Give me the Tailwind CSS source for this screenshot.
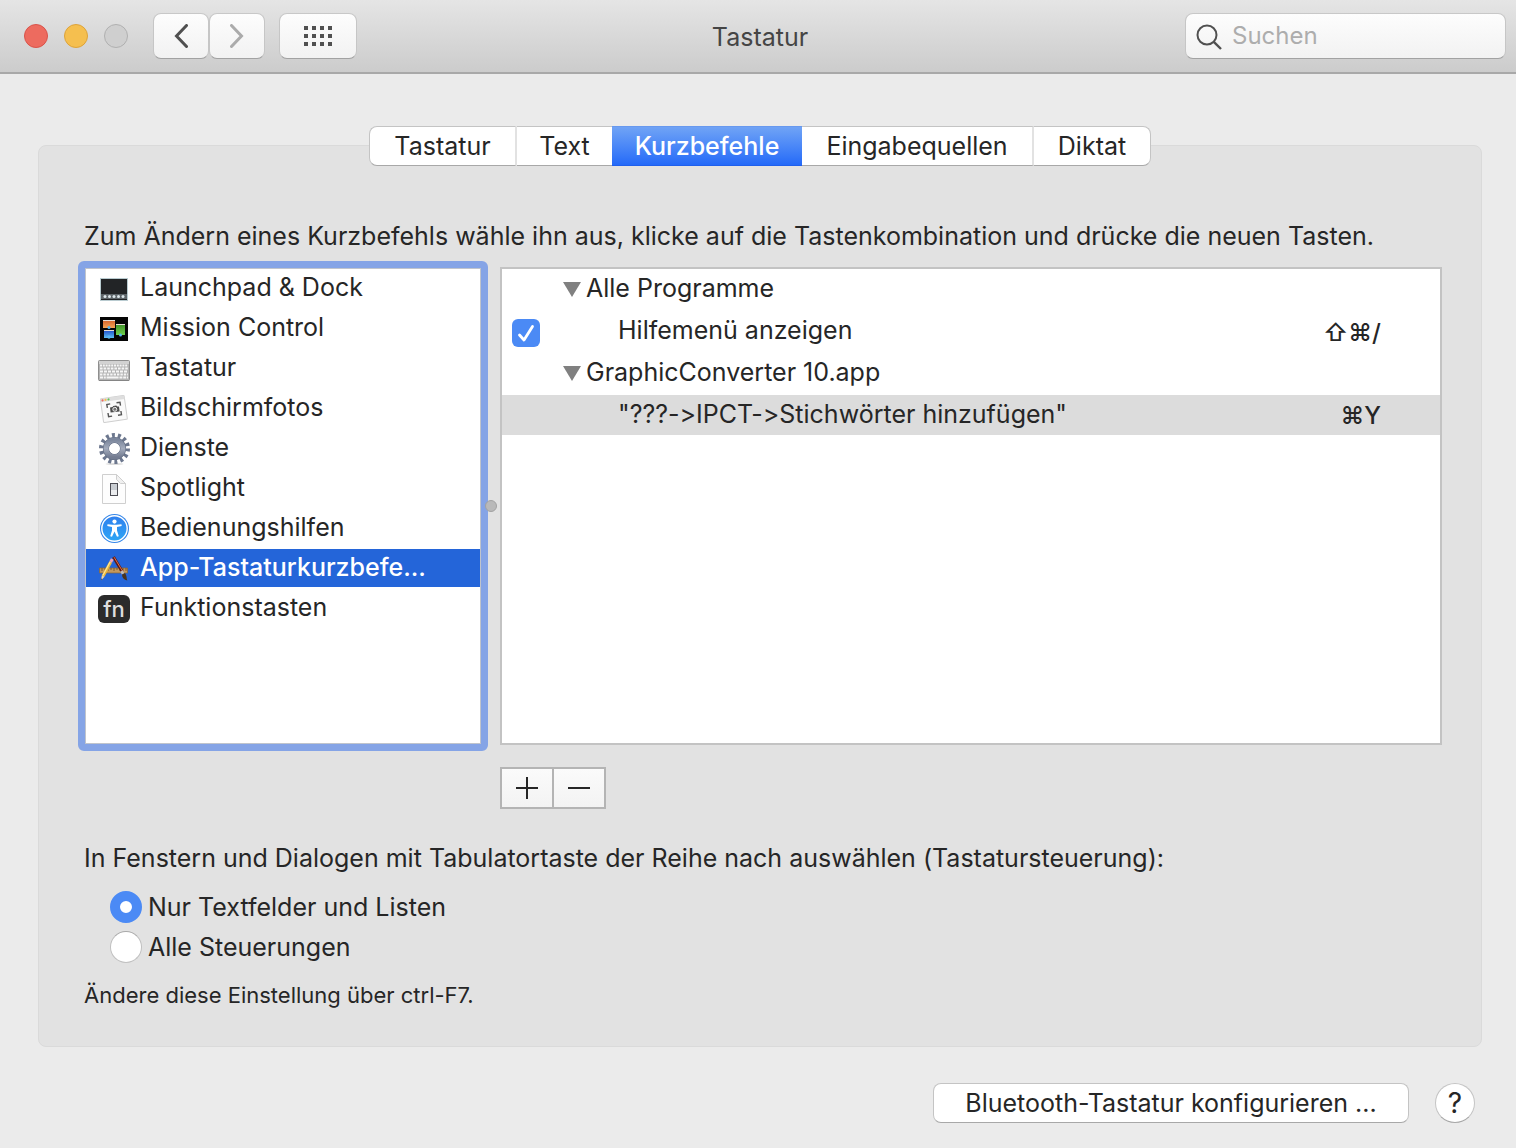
<!DOCTYPE html>
<html lang="de">
<head>
<meta charset="utf-8">
<meta name="viewport" content="width=device-width, initial-scale=1">
<title>Tastatur</title>
<script src="https://cdn.jsdelivr.net/npm/@tailwindcss/browser@4"></script>
</head>
<body class="flex min-h-screen flex-col bg-[#ebebeb] font-['Inter','Liberation_Sans',sans-serif] text-[25px] leading-8 text-[#262626] [font-feature-settings:'calt'_0]">

<header class="grid h-[74px] grid-cols-[1fr_auto_1fr] items-center border-b-2 border-[#a8a8a8] bg-linear-to-b from-[#e5e5e5] to-[#cccccc] px-[10px]">
  <div class="flex items-center pl-[14px]">
    <div class="flex gap-4">
      <button type="button" aria-label="Schließen" class="size-6 rounded-full border border-[#d9534a] bg-[#ed6b5f]"></button>
      <button type="button" aria-label="Minimieren" class="size-6 rounded-full border border-[#dda33a] bg-[#f5bf4f]"></button>
      <button type="button" aria-label="Zoomen" disabled class="size-6 rounded-full border border-[#b0b0b0] bg-[#cfcfcf]"></button>
    </div>
    <div class="ml-[25px] flex">
      <button type="button" aria-label="Zurück" class="flex h-[46px] w-14 items-center justify-center rounded-lg border border-x-[#c6c6c6] border-t-[#c8c8c8] border-b-[#a2a2a2] bg-linear-to-b from-[#fdfdfd] to-[#f2f2f2]">
        <svg width="14" height="24" viewBox="0 0 14 24" fill="none" stroke="#505050" stroke-width="3" stroke-linecap="round" stroke-linejoin="miter"><path d="M12.500 1.500 2.500 12l10 10.500"/></svg>
      </button>
      <button type="button" aria-label="Vorwärts" disabled class="flex h-[46px] w-14 items-center justify-center rounded-lg border border-x-[#c6c6c6] border-t-[#c8c8c8] border-b-[#a2a2a2] bg-linear-to-b from-[#fdfdfd] to-[#f2f2f2]">
        <svg width="14" height="24" viewBox="0 0 14 24" fill="none" stroke="#ababab" stroke-width="3" stroke-linecap="round" stroke-linejoin="miter"><path d="M1.500 1.500 11.500 12l-10 10.500"/></svg>
      </button>
    </div>
    <button type="button" aria-label="Alle einblenden" class="ml-[14px] flex h-[46px] w-[78px] items-center justify-center rounded-lg border border-x-[#c6c6c6] border-t-[#c8c8c8] border-b-[#a2a2a2] bg-linear-to-b from-[#fdfdfd] to-[#f2f2f2]">
      <svg width="28" height="20" fill="#505050"><path d="M0 0h4v4H0zM8 0h4v4H8zM16 0h4v4h-4zM24 0h4v4h-4zM0 8h4v4H0zM8 8h4v4H8zM16 8h4v4h-4zM24 8h4v4h-4zM0 16h4v4H0zM8 16h4v4H8zM16 16h4v4h-4zM24 16h4v4h-4z"/></svg>
    </button>
  </div>
  <h1 class="pt-[2px] pl-1 text-[#454545]">Tastatur</h1>
  <label class="flex h-[46px] w-[321px] items-center gap-[10px] justify-self-end rounded-lg border border-x-[#c6c6c6] border-t-[#c8c8c8] border-b-[#a2a2a2] bg-linear-to-b from-[#fdfdfd] to-[#f2f2f2] pl-[10px]">
    <svg class="mt-[2px] shrink-0" width="26" height="26" fill="none" stroke="#505050" stroke-width="2"><circle cx="11" cy="11" r="9.500"/><path d="M17.800 17.800 25 25" stroke-width="2.400"/></svg>
    <input type="search" aria-label="Suchen" placeholder="Suchen" class="h-8 min-w-0 flex-1 bg-transparent text-2xl text-[#262626] outline-none placeholder:text-[#adadad]">
  </label>
</header>

<main class="flex flex-1 flex-col pt-[52px] pr-[34px] pl-[38px]">
  <div role="tablist" class="z-10 flex h-10 justify-center">
    <button type="button" role="tab" class="w-[148px] rounded-l-lg border border-r-2 border-[#c4c4c4] border-r-[#e2e2e2] border-b-[#a8a8a8] bg-white">Tastatur</button>
    <button type="button" role="tab" class="w-[95px] border-y border-t-[#c4c4c4] border-b-[#a8a8a8] bg-white">Text</button>
    <button type="button" role="tab" aria-selected="true" class="w-[190px] border-y border-t-[#6899ef] border-b-[#1f5fec] bg-linear-to-b from-[#70a3f5] to-[#2469f8] font-medium text-white">Kurzbefehle</button>
    <button type="button" role="tab" class="w-[232px] border-y border-r-2 border-t-[#c4c4c4] border-r-[#e2e2e2] border-b-[#a8a8a8] bg-white">Eingabequellen</button>
    <button type="button" role="tab" class="w-[117px] rounded-r-lg border border-l-0 border-[#c4c4c4] border-b-[#a8a8a8] bg-white">Diktat</button>
  </div>

  <section class="-mt-[21px] flex flex-col rounded-lg border border-[#dadada] bg-[#e2e2e2] px-[39px] pt-[74px] pb-[35px]">
    <p class="px-[6px]">Zum Ändern eines Kurzbefehls wähle ihn aus, klicke auf die Tastenkombination und drücke die neuen Tasten.</p>

    <div class="mt-[9px] grid grid-cols-[410px_1fr] items-center gap-x-3">
      <div class="relative rounded-md border-[7px] border-[#85a4e6]">
        <ul role="listbox" aria-label="Kategorien" class="flex h-[476px] flex-col gap-[2px] border border-[#c0c4cc] bg-white">
          <li role="option" class="flex h-[38px] items-center gap-[10px] pb-[2px] pl-3">
            <svg class="mt-1 shrink-0" width="32" height="32" viewBox="0 0 32 32"><rect x="2" y="5" width="28" height="23" fill="#b9cbd0"/><rect x="3" y="6" width="26" height="21" fill="#222426"/><rect x="3" y="21" width="26" height="5" fill="#5d6468"/><g fill="#dce6ea"><circle cx="7" cy="23.500" r="1.500"/><circle cx="11.500" cy="23.500" r="1.500"/><circle cx="16" cy="23.500" r="1.500"/><circle cx="20.500" cy="23.500" r="1.500"/><circle cx="25" cy="23.500" r="1.500"/></g></svg>
            Launchpad &amp; Dock
          </li>
          <li role="option" class="flex h-[38px] items-center gap-[10px] pb-[2px] pl-3">
            <svg class="mt-1 shrink-0" width="32" height="32" viewBox="0 0 32 32"><defs><linearGradient id="mo" x2="0" y2="1"><stop stop-color="#d3622c"/><stop offset="1" stop-color="#f5a455"/></linearGradient><linearGradient id="mb" x2="0" y2="1"><stop stop-color="#1c49c9"/><stop offset="1" stop-color="#5cc0f5"/></linearGradient><linearGradient id="mg" x2="0" y2="1"><stop stop-color="#3d8f28"/><stop offset="1" stop-color="#6fd04c"/></linearGradient></defs><rect x="2" y="4" width="28" height="24" fill="#050505"/><path fill="url(#mo)" d="M5 7h12v8H5z"/><path fill="url(#mb)" d="M6 17h10v8H6z"/><path fill="url(#mg)" d="M18 11h9v11h-9z"/><path stroke="#e8e0d8" d="M5 7.500h12M6 17.500h10M18 11.500h9"/><g fill="#58b7f2"><circle cx="11" cy="14.500" r="1.500"/><circle cx="11" cy="24" r="1.700"/><circle cx="22.500" cy="22" r="1.500"/></g></svg>
            Mission Control
          </li>
          <li role="option" class="flex h-[38px] items-center gap-[10px] pb-[2px] pl-3">
            <svg class="mt-1 shrink-0" width="32" height="32" viewBox="0 0 32 32"><rect x=".5" y="7.500" width="31" height="20" rx="1" fill="#b4b4b4" stroke="#8e8e8e"/><path fill="#d2d2d2" d="M1 8h30v3H1z"/><path stroke="#858585" d="M1 27.500h30"/><g stroke="#f6f6f6" stroke-width="2" fill="none"><path stroke-dasharray="2 .8" d="M2 12.500h28"/><path stroke-dasharray="2.600 1" d="M2 15.500h28"/><path stroke-dasharray="3 1" d="M2 18.500h28"/><path stroke-dasharray="2.400 1" d="M2 21.500h28"/><path stroke-dasharray="3 .8 2 .8 12 .8 3 .8" d="M2 24.500h28"/></g></svg>
            Tastatur
          </li>
          <li role="option" class="flex h-[38px] items-center gap-[10px] pb-[2px] pl-3">
            <svg class="mt-1 shrink-0" width="32" height="32" viewBox="0 0 32 32"><g transform="rotate(-8 16 17)"><rect x="4" y="4" width="24" height="24" rx="1" fill="#fafafa" stroke="#cfcfcf"/><path fill="#dedede" d="M4 4h24v3.500H4z"/><circle cx="6" cy="5.800" r="1.100" fill="#ee6a5f"/><circle cx="9" cy="5.800" r="1.100" fill="#f5bd4f"/><circle cx="12" cy="5.800" r="1.100" fill="#61c454"/></g><g fill="none" stroke="#555" stroke-width="1.400"><path d="m9.400 14.800-.6-3.300 3.400-.6M18.500 9.800l3.500-.6.500 3.500M10 20l.6 3.700 3.500-.6M20 22.200l3.500-.6-.6-3.600"/></g><path fill="#4c4c4c" d="m12 14.500 2.500-.4.800-1.200 3-.3 1 1 1.700-.2.600 5.200-9 1z"/><circle cx="16.800" cy="16.300" r="2" fill="#777" stroke="#eee"/></svg>
            Bildschirmfotos
          </li>
          <li role="option" class="flex h-[38px] items-center gap-[10px] pb-[2px] pl-3">
            <svg class="mt-1 shrink-0" width="32" height="32" viewBox="0 0 32 32"><defs><linearGradient id="gg" x2="0" y2="1"><stop stop-color="#7b869c"/><stop offset=".5" stop-color="#a4acbd"/><stop offset="1" stop-color="#737c91"/></linearGradient></defs><ellipse cx="16.500" cy="31" rx="9" ry=".8" fill="#d0d0d0"/><circle cx="16.500" cy="15.500" r="13" fill="none" stroke="#6c778e" stroke-width="5" stroke-dasharray="2.900 2.934"/><circle cx="16.500" cy="15.500" r="8.500" fill="none" stroke="#626d83" stroke-width="6.200"/><circle cx="16.500" cy="15.500" r="8.500" fill="none" stroke="url(#gg)" stroke-width="5"/><circle cx="16.500" cy="15.500" r="5.200" fill="#fff"/></svg>
            Dienste
          </li>
          <li role="option" class="flex h-[38px] items-center gap-[10px] pb-[2px] pl-3">
            <svg class="mt-1 shrink-0" width="32" height="32" viewBox="0 0 32 32"><path d="M4.500 1.500h14l9 9v20h-23z" fill="#fdfdfd" stroke="#cfcfcf"/><path d="M18.500 1.500v5l4 4h5z" fill="#f0f0f0" stroke="#cfcfcf"/><rect x="12.500" y="10.500" width="7" height="12" fill="#ebecee" stroke="#4d4d55"/><path fill="#c9cdd2" d="M13 11h6v6h-6z"/></svg>
            Spotlight
          </li>
          <li role="option" class="flex h-[38px] items-center gap-[10px] pb-[2px] pl-3">
            <svg class="mt-1 shrink-0" width="32" height="32" viewBox="0 0 32 32"><defs><linearGradient id="ab" x2="0" y2="1"><stop stop-color="#2f7fee"/><stop offset="1" stop-color="#2da5f5"/></linearGradient></defs><circle cx="16.500" cy="15.500" r="14.500" fill="#3486e8"/><circle cx="16.500" cy="15.500" r="12.700" fill="url(#ab)" stroke="#fff" stroke-width="1.400"/><circle cx="16.500" cy="8.600" r="2.100" fill="#fff"/><path fill="#fff" d="m9.500 11.300 5 .5h4l5-.5.200 1.700-4.700 1.100v3.400l1.800 5.700-1.800.6-2.500-5.300-2.500 5.300-1.800-.6 1.800-5.700v-3.400L9.300 13z"/></svg>
            Bedienungshilfen
          </li>
          <li role="option" aria-selected="true" class="flex h-[38px] items-center gap-[10px] bg-[#2465d9] pb-[2px] pl-3 font-medium text-white">
            <svg class="mt-1 shrink-0" width="32" height="32" viewBox="0 0 32 32"><path fill="#c4985c" stroke="#8a6435" stroke-width=".7" d="M1.500 15h28v5h-28z"/><path stroke="#6e4c25" stroke-width=".8" d="M4 15v3M7 15v2M10 15v3M13 15v2M16 15v3M19 15v2M22 15v3M25 15v2M28 15v3"/><path stroke="#5d1a10" stroke-width="3" d="m15.500 4 9 15"/><path stroke="#e06c4c" stroke-width="1" d="m16.100 4.200 8.300 13.800"/><path stroke="#b9b9b9" stroke-width="3" d="m23.500 18 1.800 3"/><path fill="#49331d" d="m24 21.500 3-1.500c2 2.500 1.300 5 2.300 7.500-3.300-.7-5.300-2.500-5.300-6z"/><path stroke="#edb83a" stroke-width="3" d="M12.700 9 5.200 23"/><path stroke="#ffe79a" stroke-width="1.200" d="m12.200 8.800-7.400 13.700"/><path stroke="#e9a3bd" stroke-width="3" d="m14.300 6-1.600 3"/><path fill="#f6d8a5" d="m3.900 22.300 2.600 1.500L3 27.500z"/><path fill="#333" d="m3.300 25.500 1 .6L3 27.500z"/></svg>
            App-Tastaturkurzbefe...
          </li>
          <li role="option" class="flex h-[38px] items-center gap-[10px] pb-[2px] pl-3">
            <span class="mt-1 flex h-7 w-8 shrink-0 items-center justify-center rounded-md bg-[#2b2b2b] text-[22px] leading-7 font-medium text-[#dedede]">fn</span>
            Funktionstasten
          </li>
        </ul>
        <span class="absolute top-[232px] -right-[16px] size-3 rounded-full border border-[#a2a2a2] bg-[#b9b9b9]"></span>
      </div>

      <div class="h-[478px] border-2 border-[#c3c3c3] bg-white">
        <table class="w-full table-fixed border-collapse" aria-label="Kurzbefehle">
          <colgroup><col class="w-[60px]"><col><col class="w-[180px]"></colgroup>
          <tbody>
            <tr class="h-[42px]">
              <td></td>
              <td colspan="2" class="pb-1"><div class="flex items-center gap-1"><svg class="mt-[2px]" width="20" height="16" fill="#808080"><path d="M1 1h18l-9 15z"/></svg>Alle Programme</div></td>
            </tr>
            <tr class="h-[42px]">
              <td class="pt-[2px] pl-[10px]"><input id="help" type="checkbox" checked class="block size-7 appearance-none rounded-md bg-[#4b8af5] bg-[url('data:image/svg+xml,%3Csvg%20xmlns=%22http://www.w3.org/2000/svg%22%20viewBox=%220%200%2028%2028%22%3E%3Cpath%20d=%22M7.500%2016l4.500%205L20.500%207.500%22%20fill=%22none%22%20stroke=%22white%22%20stroke-width=%222.800%22%20stroke-linecap=%22round%22%20stroke-linejoin=%22round%22/%3E%3C/svg%3E')]"></td>
              <td class="pb-1 pl-[56px]"><label for="help">Hilfemenü anzeigen</label></td>
              <td class="pt-[2px] pr-[59px] text-right text-2xl leading-8 font-medium">⇧⌘/</td>
            </tr>
            <tr class="h-[42px]">
              <td></td>
              <td colspan="2" class="pb-1"><div class="flex items-center gap-1"><svg class="mt-[2px]" width="20" height="16" fill="#808080"><path d="M1 1h18l-9 15z"/></svg>GraphicConverter 10.app</div></td>
            </tr>
            <tr class="h-10 bg-[#dcdcdc]">
              <td></td>
              <td class="pb-[2px] pl-[56px]">"???-&gt;IPCT-&gt;Stichwörter hinzufügen"</td>
              <td class="pt-[2px] pr-[59px] text-right text-2xl leading-8 font-medium">⌘Y</td>
            </tr>
          </tbody>
        </table>
      </div>

      <div class="col-start-2 mt-4 flex">
        <button type="button" aria-label="Hinzufügen" class="flex h-[42px] w-[54px] items-center justify-center border-2 border-[#b4b4b4] bg-linear-to-b from-[#fbfbfb] to-[#f3f3f3]"><svg width="22" height="22" stroke="#262626" stroke-width="2"><path d="M0 11h22M11 0v22"/></svg></button>
        <button type="button" aria-label="Entfernen" class="flex h-[42px] w-[52px] items-center justify-center border-2 border-l-0 border-[#b4b4b4] bg-linear-to-b from-[#fbfbfb] to-[#f3f3f3]"><svg width="22" height="22" stroke="#262626" stroke-width="2"><path d="M0 11h22"/></svg></button>
      </div>
    </div>

    <fieldset class="mt-[33px] px-[6px]">
      <legend>In Fenstern und Dialogen mit Tabulatortaste der Reihe nach auswählen (Tastatursteuerung):</legend>
      <div class="mt-[17px] flex flex-col gap-2 pl-[26px]">
        <label class="flex items-center gap-[6px]"><input type="radio" name="focus" checked class="size-8 appearance-none rounded-full border border-[#c0c0c0] border-t-[#a8a8a8] bg-white checked:border-[10px] checked:border-[#4b8af5]">Nur Textfelder und Listen</label>
        <label class="flex items-center gap-[6px]"><input type="radio" name="focus" class="size-8 appearance-none rounded-full border border-[#c0c0c0] border-t-[#a8a8a8] bg-white checked:border-[10px] checked:border-[#4b8af5]">Alle Steuerungen</label>
      </div>
    </fieldset>
    <p class="mt-4 px-[6px] text-[22px]">Ändere diese Einstellung über ctrl-F7.</p>
  </section>

  <footer class="mt-9 flex items-center justify-end gap-[26px] pr-[7px] pb-6">
    <button type="button" class="h-10 w-[476px] rounded-lg border border-[#c4c4c4] border-b-[#a8a8a8] bg-white">Bluetooth-Tastatur konfigurieren ...</button>
    <button type="button" aria-label="Hilfe" class="size-10 rounded-full border border-[#c4c4c4] border-b-[#a8a8a8] bg-white text-[28px]">?</button>
  </footer>
</main>
</body>
</html>
